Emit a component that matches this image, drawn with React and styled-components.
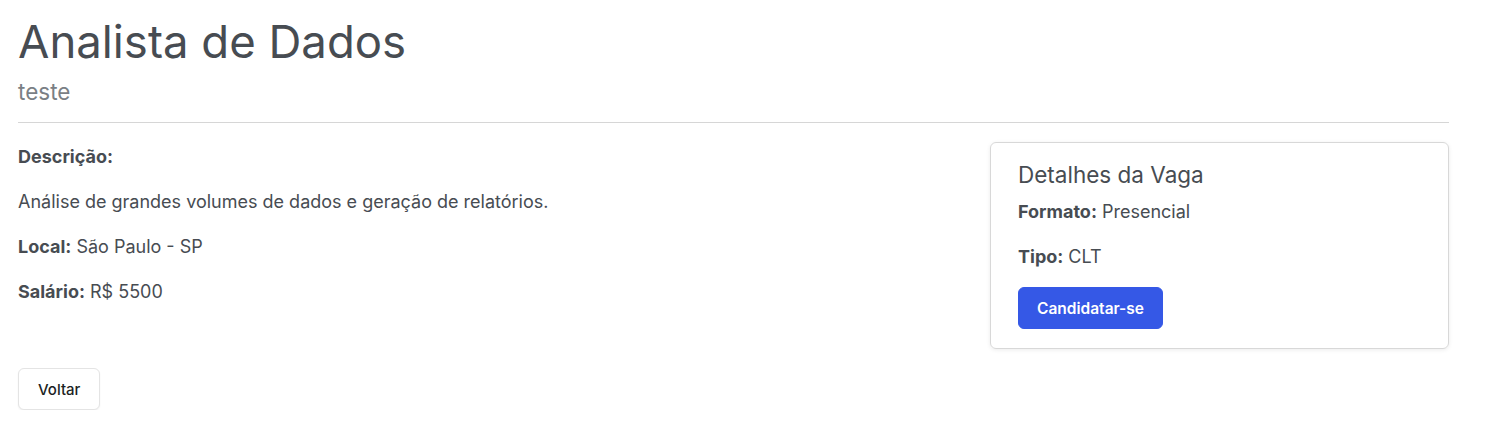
import styled, { createGlobalStyle } from "styled-components";

const GlobalStyle = createGlobalStyle`
  body {
    margin: 0;
    background: #fff;
    font-family: Inter, "Noto Sans", sans-serif;
    color: #474c52;
  }
`;

const Page = styled.div`
  width: 1431px;
  padding: 12px 0 0 18px;
`;

const Title = styled.h1`
  margin: 0;
  font-size: 45.5px;
  font-weight: 400;
  line-height: 60px;
  color: #474c52;
`;

const Subtitle = styled.p`
  margin: 6px 0 0;
  font-size: 22.5px;
  line-height: 28px;
  color: #7a7f85;
`;

const Divider = styled.hr`
  margin: 16px 0 0;
  border: 0;
  border-top: 1px solid #d6d6d6;
`;

const Body = styled.div`
  display: grid;
  grid-template-columns: 1fr 459px;
  margin-top: 19px;
`;

const Info = styled.div`
  display: flex;
  flex-direction: column;
`;

const Line = styled.p`
  margin: 0 0 16px;
  font-size: 18px;
  line-height: 29px;
  strong {
    font-weight: 700;
  }
`;

const Card = styled.div`
  border: 1px solid #d8d8d8;
  border-radius: 6px;
  box-shadow: 0 1px 4px rgba(0, 0, 0, 0.08);
  padding: 17px 27px 19px;
`;

const CardTitle = styled.h2`
  margin: 0 0 7px;
  font-size: 22.5px;
  font-weight: 400;
  line-height: 30px;
`;

const Button = styled.button`
  font-family: Inter, "Noto Sans", sans-serif;
  font-size: ${({ primary }) => (primary ? "15.5px" : "15px")};
  font-weight: ${({ primary }) => (primary ? 600 : 500)};
  height: 42px;
  padding: 0 ${({ primary }) => (primary ? "18px" : "19px")};
  border-radius: 6px;
  cursor: pointer;
  border: 1px solid ${({ primary }) => (primary ? "#3558e6" : "#e4e4e4")};
  background: ${({ primary }) => (primary ? "#3558e6" : "#fff")};
  color: ${({ primary }) => (primary ? "#fff" : "#1c1f24")};
  box-shadow: ${({ primary }) => (primary ? "none" : "0 1px 2px rgba(0,0,0,0.06)")};
`;

const Footer = styled.div`
  margin-top: 19px;
`;

export default function App() {
  return (
    <>
      <GlobalStyle />
      <Page>
        <Title>Analista de Dados</Title>
        <Subtitle>teste</Subtitle>
        <Divider />
        <Body>
          <Info>
            <Line>
              <strong>Descrição:</strong>
            </Line>
            <Line>Análise de grandes volumes de dados e geração de relatórios.</Line>
            <Line>
              <strong>Local:</strong> São Paulo - SP
            </Line>
            <Line>
              <strong>Salário:</strong> R$ 5500
            </Line>
          </Info>
          <Card>
            <CardTitle>Detalhes da Vaga</CardTitle>
            <Line>
              <strong>Formato:</strong> Presencial
            </Line>
            <Line>
              <strong>Tipo:</strong> CLT
            </Line>
            <Button primary>Candidatar-se</Button>
          </Card>
        </Body>
        <Footer>
          <Button>Voltar</Button>
        </Footer>
      </Page>
    </>
  );
}
